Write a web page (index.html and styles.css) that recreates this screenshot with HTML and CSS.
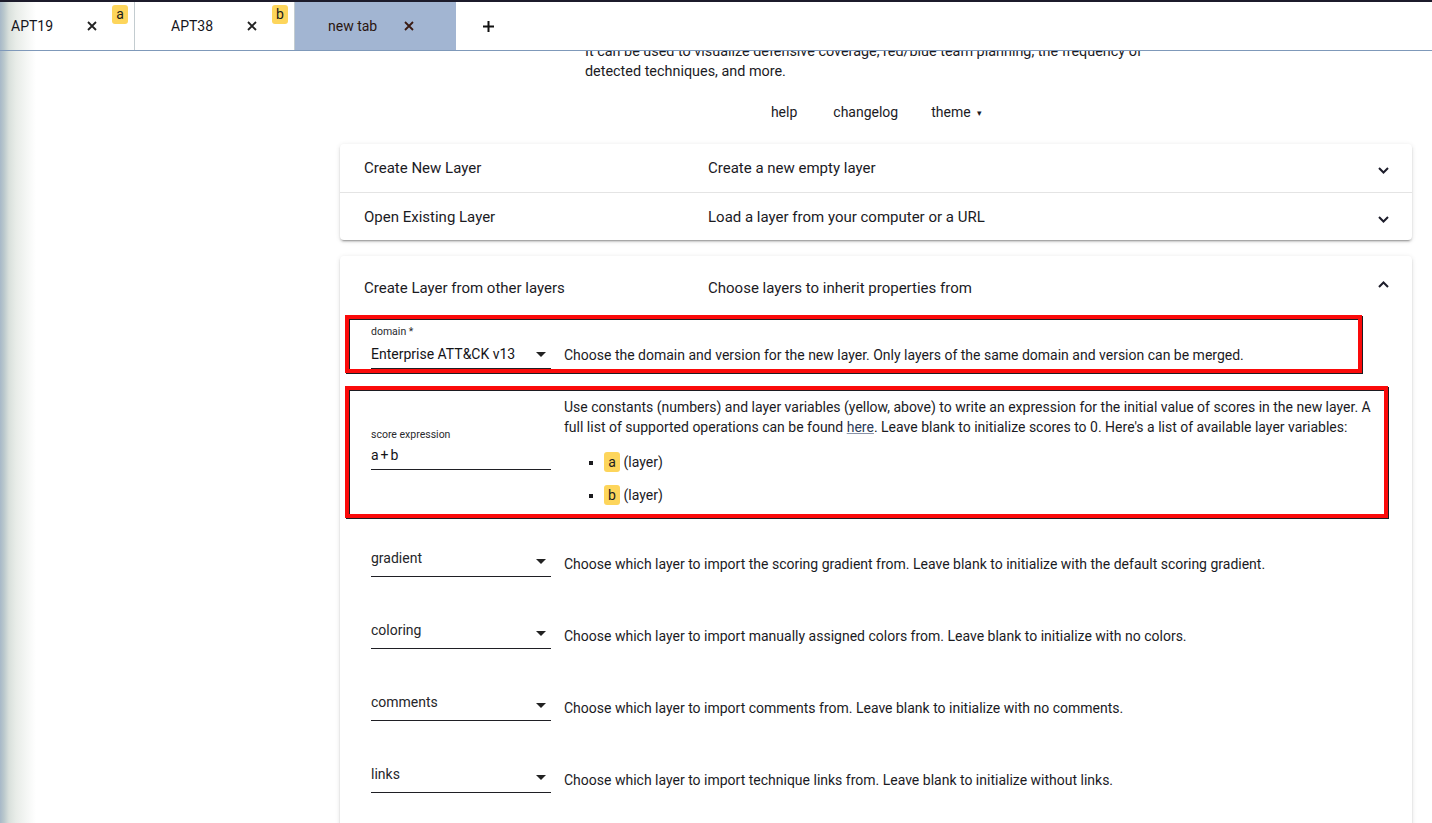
FILE: index.html
```html
<!DOCTYPE html>
<html lang="en">
<head>
<meta charset="utf-8">
<title>ATT&amp;CK Navigator</title>
<link rel="stylesheet" href="styles.css">
</head>
<body>
<div class="page">
  <div class="topline"></div>
  <div class="tabbar">
    <div class="tab">
      <span class="tab-name">APT19</span>
      <svg class="tab-close" width="10" height="10" viewBox="0 0 10 10"><path d="M1 1L9 9M9 1L1 9" stroke="#222" stroke-width="1.8" fill="none"/></svg>
      <span class="badge">a</span>
    </div>
    <div class="tab">
      <span class="tab-name">APT38</span>
      <svg class="tab-close" width="10" height="10" viewBox="0 0 10 10"><path d="M1 1L9 9M9 1L1 9" stroke="#222" stroke-width="1.8" fill="none"/></svg>
      <span class="badge">b</span>
    </div>
    <div class="tab tab-active">
      <span class="tab-name tab-name-new">new tab</span>
      <svg class="tab-close" width="10" height="10" viewBox="0 0 10 10"><path d="M1 1L9 9M9 1L1 9" stroke="#3a1a12" stroke-width="1.8" fill="none"/></svg>
    </div>
    <div class="tab-add">
      <svg width="11" height="11" viewBox="0 0 11 11"><path d="M5.5 0V11M0 5.5H11" stroke="#111" stroke-width="2" fill="none"/></svg>
    </div>
  </div>

  <main class="main">
    <p class="intro">It can be used to visualize defensive coverage, red/blue team planning, the frequency of detected techniques, and more.</p>
    <nav class="nav">
      <span class="nav-btn">help</span>
      <span class="nav-btn">changelog</span>
      <span class="nav-btn">theme <span class="caret">&#9662;</span></span>
    </nav>

    <section class="card">
      <div class="panel-header">
        <span class="panel-title">Create New Layer</span>
        <span class="panel-desc">Create a new empty layer</span>
        <svg class="chevron chevron-down" width="11" height="7" viewBox="0 0 11 7"><path d="M1 1L5.5 5.5L10 1" stroke="#1d1d2b" stroke-width="2" fill="none"/></svg>
      </div>
      <div class="panel-header panel-sep">
        <span class="panel-title">Open Existing Layer</span>
        <span class="panel-desc">Load a layer from your computer or a URL</span>
        <svg class="chevron chevron-down" width="11" height="7" viewBox="0 0 11 7"><path d="M1 1L5.5 5.5L10 1" stroke="#1d1d2b" stroke-width="2" fill="none"/></svg>
      </div>
    </section>

    <section class="card card-expanded">
      <div class="panel-header panel-header-tall">
        <span class="panel-title">Create Layer from other layers</span>
        <span class="panel-desc">Choose layers to inherit properties from</span>
        <svg class="chevron chevron-up" width="11" height="7" viewBox="0 0 11 7"><path d="M1 6L5.5 1.5L10 6" stroke="#1d1d2b" stroke-width="2" fill="none"/></svg>
      </div>
      <div class="panel-body">
        <div class="row row-domain marked">
          <div class="field">
            <div class="field-label">domain *</div>
            <div class="control">
              <span class="control-value">Enterprise ATT&amp;CK v13</span>
              <svg class="arrow" width="10" height="5" viewBox="0 0 10 5"><path d="M0 0H10L5 5Z" fill="#222"/></svg>
            </div>
          </div>
          <div class="row-desc row-desc-domain">Choose the domain and version for the new layer. Only layers of the same domain and version can be merged.</div>
        </div>

        <div class="row row-score marked">
          <div class="field field-score">
            <div class="field-label field-label-tight">score expression</div>
            <div class="control">
              <span class="control-value expr">a+b</span>
            </div>
          </div>
          <div class="row-desc row-desc-score">
            Use constants (numbers) and layer variables (yellow, above) to write an expression for the initial value of scores in the new layer. A full list of supported operations can be found <a class="link">here</a>. Leave blank to initialize scores to 0. Here's a list of available layer variables:
            <ul class="vars">
              <li><span class="chip">a</span> (layer)</li>
              <li><span class="chip">b</span> (layer)</li>
            </ul>
          </div>
        </div>

        <div class="row row-select">
          <div class="field">
            <div class="control">
              <span class="control-value placeholder">gradient</span>
              <svg class="arrow" width="10" height="5" viewBox="0 0 10 5"><path d="M0 0H10L5 5Z" fill="#222"/></svg>
            </div>
          </div>
          <div class="row-desc">Choose which layer to import the scoring gradient from. Leave blank to initialize with the default scoring gradient.</div>
        </div>

        <div class="row row-select">
          <div class="field">
            <div class="control">
              <span class="control-value placeholder">coloring</span>
              <svg class="arrow" width="10" height="5" viewBox="0 0 10 5"><path d="M0 0H10L5 5Z" fill="#222"/></svg>
            </div>
          </div>
          <div class="row-desc">Choose which layer to import manually assigned colors from. Leave blank to initialize with no colors.</div>
        </div>

        <div class="row row-select">
          <div class="field">
            <div class="control">
              <span class="control-value placeholder">comments</span>
              <svg class="arrow" width="10" height="5" viewBox="0 0 10 5"><path d="M0 0H10L5 5Z" fill="#222"/></svg>
            </div>
          </div>
          <div class="row-desc">Choose which layer to import comments from. Leave blank to initialize with no comments.</div>
        </div>

        <div class="row row-select">
          <div class="field">
            <div class="control">
              <span class="control-value placeholder">links</span>
              <svg class="arrow" width="10" height="5" viewBox="0 0 10 5"><path d="M0 0H10L5 5Z" fill="#222"/></svg>
            </div>
          </div>
          <div class="row-desc">Choose which layer to import technique links from. Leave blank to initialize without links.</div>
        </div>
      </div>
    </section>
  </main>
</div>
</body>
</html>
```

FILE: styles.css
```css
html, body {
  margin: 0;
  height: 100%;
}

body {
  font-family: Roboto, "Noto Sans", Arial, sans-serif;
  font-size: 14px;
  color: #1b1b1f;
  background:
    linear-gradient(to right, #a7b8c8 0, #bac8cc 4px, #d9e0dc 9px, #e8ece8 16px, #f4f6f4 26px, #ffffff 36px) left top / 36px 100% no-repeat,
    #ffffff;
  overflow: hidden;
}

.page {
  display: flex;
  flex-direction: column;
  height: 100vh;
}

.topline {
  height: 2px;
  background: #1c1b2b;
  flex: none;
}

/* ---------- tabs ---------- */
.tabbar {
  flex: none;
  height: 48px;
  display: flex;
  align-items: stretch;
  border-bottom: 1px solid #7f99ba;
  margin-left: -25px;
}

.tab {
  width: 160px;
  box-sizing: border-box;
  display: flex;
  align-items: center;
  padding-left: 36px;
  border-right: 1px solid #c3ccd0;
}

.tab-name {
  width: 76px;
  font-size: 14px;
  line-height: 20px;
  color: #15151c;
}

.tab-name-new {
  color: #2a1610;
}

.tab-close {
  flex: none;
}

.badge {
  align-self: flex-start;
  margin-top: 3px;
  margin-left: 15px;
  width: 16px;
  height: 19px;
  border-radius: 3px;
  background: #fdd55b;
  font-size: 14px;
  line-height: 18px;
  text-align: center;
  color: #1a1a1a;
}

.tab-active {
  background: #a2b5d2;
  border-right: none;
  padding-left: 33px;
  width: 161px;
}

.tab-add {
  width: 64px;
  display: flex;
  align-items: center;
  justify-content: center;
}

/* ---------- main ---------- */
.main {
  flex: 1;
  overflow: hidden;
  padding: 0 20px 0 340px;
}

.intro {
  width: 582px;
  margin: -9px auto 0;
  font-size: 14.4px;
  line-height: 20px;
}

.nav {
  display: flex;
  justify-content: center;
  margin-top: 20px;
  line-height: 20px;
}

.nav-btn {
  padding: 0 16px;
  margin-left: 1px;
}

.nav-btn:first-child {
  margin-right: 3px;
}

.caret {
  font-size: 9px;
  margin-left: 3px;
  vertical-align: 1px;
}

/* ---------- accordion ---------- */
.card {
  background: #fff;
  border-radius: 4px;
  box-shadow: 0 3px 1px -2px rgba(0, 0, 0, .2), 0 2px 2px 0 rgba(0, 0, 0, .14), 0 1px 5px 0 rgba(0, 0, 0, .12);
  margin-top: 21px;
}

.card-expanded {
  margin-top: 16px;
  padding-bottom: 20px;
}

.panel-header {
  height: 48px;
  display: flex;
  align-items: center;
  padding: 0 23px 0 24px;
  font-size: 15px;
}

.panel-sep {
  border-top: 1px solid #e4e4e4;
  height: 47px;
}

.panel-header-tall {
  height: 64px;
}

.panel-title {
  width: 344px;
  flex: none;
}

.panel-desc {
  flex: 1;
}

.chevron {
  flex: none;
}

.chevron-down {
  margin-top: 5px;
}

.chevron-up {
  margin-bottom: 7px;
}

/* ---------- form rows ---------- */
.panel-body {
  display: flex;
  flex-direction: column;
}

.row {
  display: flex;
  align-items: center;
  box-sizing: border-box;
  margin: 0 24px 0 5px;
  border: 4px solid transparent;
  padding-left: 22px;
}

.marked {
  border-color: #fb0a0a;
  box-shadow: 1px 1px 0 #1c1c22, inset 1px 1px 0 #1c1c22;
}

.row-domain {
  margin-top: -5px;
  margin-right: 50px;
  height: 58px;
  align-items: flex-end;
}

.row-score {
  margin-top: 13px;
  height: 132px;
}

.row-select {
  height: 72px;
}

.row-score + .row-select {
  margin-top: 8px;
}

.row-select .row-desc {
  padding-top: 3px;
}

.field {
  width: 180px;
  flex: none;
  display: flex;
  flex-direction: column;
}

.field-score {
  margin-bottom: 6px;
}

.field-label {
  font-size: 10.5px;
  line-height: 12px;
  color: #2a2a2e;
  margin-bottom: 6px;
}

.field-label-tight {
  margin-bottom: 4px;
}

.control {
  display: flex;
  align-items: center;
  border-bottom: 1px solid #1f1f24;
  padding-bottom: 4px;
}

.row-select .control {
  padding-bottom: 0;
}

.control-value {
  flex: 1;
  font-size: 14px;
  line-height: 20px;
  color: #141418;
}

.expr {
  letter-spacing: 2px;
}

.placeholder {
  padding-bottom: 8px;
  color: #26262a;
}

.arrow {
  flex: none;
  margin-right: 5px;
}

.row-desc {
  flex: 1;
  margin-left: 13px;
  line-height: 20px;
}

.row-desc-domain {
  padding-bottom: 4px;
}

.row-desc-score {
  padding-right: 2px;
}

.link {
  color: #2c3a58;
  text-decoration: underline;
  text-decoration-color: #8a93a8;
}

.vars {
  margin: 13px 0 0;
  padding-left: 40px;
  list-style: square;
}

.vars li {
  line-height: 24px;
  height: 24px;
}

.vars li + li {
  margin-top: 9px;
}

.chip {
  display: inline-block;
  width: 16px;
  height: 20px;
  line-height: 20px;
  text-align: center;
  border-radius: 3px;
  background: #fdd55b;
  vertical-align: middle;
  margin-top: -2px;
}
```
